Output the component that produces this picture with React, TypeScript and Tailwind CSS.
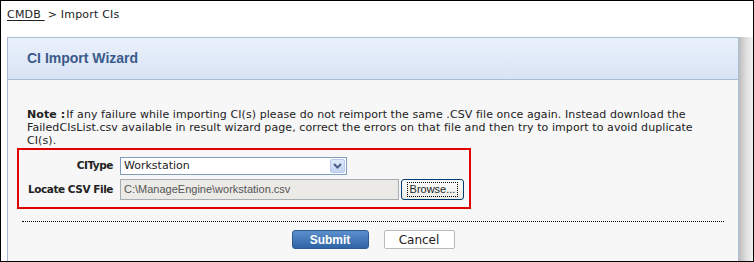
import React from "react";

const verdana = "font-['DejaVu_Sans',Verdana,sans-serif]";

const Label = ({ children }: { children: React.ReactNode }) => (
  <div className={`w-[93px] flex justify-end whitespace-nowrap text-[10.5px] tracking-[-0.45px] font-bold text-[#222] ${verdana}`}>{children}</div>
);

export default function App() {
  return (
    <div className="w-[754px] h-[262px] overflow-hidden border border-black bg-white">
      <div className={`flex items-center h-[27px] pl-[6px] pt-[1px] text-[11px] text-[#222] tracking-[0.2px] ${verdana}`}>
        <span className="underline underline-offset-2">CMDB&nbsp;</span>
        <span className="ml-[3px]">&gt; Import CIs</span>
      </div>

      <div className="flex mt-[9px] ml-[6px]">
        <div className="w-[732px] border-x border-t border-[#a9bcd6] bg-[#f7f7f7] h-[230px]">
          <div className="h-[42px] flex items-center pl-[19px] border-b border-[#a9bcd6] bg-gradient-to-b from-[#eaf1fb] to-[#d8e4f5]">
            <span className="font-['Liberation_Sans',Arial,sans-serif] font-bold text-[14px] text-[#3b5a8a]">CI Import Wizard</span>
          </div>

          <div className="pt-[28px]">
            {/* note split per line, as in the original */}
            <div className={`ml-[19px] text-[11px] leading-[13px] tracking-[0.08px] text-[#222] whitespace-nowrap ${verdana}`}>
              <div className="flex">
                <b className="mr-[1px]">Note :</b>
                <span>If any failure while importing CI(s) please do not reimport the same .CSV file once again. Instead download the</span>
              </div>
              <div>FailedCIsList.csv available in result wizard page, correct the errors on that file and then try to import to avoid duplicate</div>
              <div>CI(s).</div>
            </div>

            <div className="ml-[9px] mt-[1px] w-[454px] h-[61px] border-2 border-[#e00000] pl-[1px] pt-[7px] flex flex-col gap-[4px]">
              <div className="flex items-center gap-[7px]">
                <Label>CIType</Label>
                <div className="w-[227px] h-[18px] border border-[#7f9db9] bg-white flex items-center justify-between pl-[3px] pr-[1px]">
                  <span className={`text-[11px] text-[#222] ${verdana}`}>Workstation</span>
                  <span className="w-[15px] h-[14px] rounded-[2px] border border-[#b8c9ec] bg-gradient-to-b from-[#e0e9fb] to-[#c3d3f5] flex items-center justify-center">
                    <svg width="9" height="6" viewBox="0 0 9 6">
                      <path d="M1 1 L4.5 4.5 L8 1" fill="none" stroke="#4d6185" strokeWidth="2" />
                    </svg>
                  </span>
                </div>
              </div>
              <div className="flex items-center gap-[7px]">
                <Label>Locate CSV File</Label>
                <div className="flex items-center gap-[2px]">
                  <div className="w-[279px] h-[21px] border border-[#a5acb2] bg-[#ebeae6] flex items-center pl-[3px]">
                    <span className="text-[11px] text-[#555] font-['Liberation_Sans',Tahoma,sans-serif]">C:\ManageEngine\workstation.csv</span>
                  </div>
                  <div className="w-[63px] h-[21px] rounded-[3px] border border-[#003c74] bg-gradient-to-b from-[#ffffff] to-[#ecebe6] flex items-center justify-center">
                    <span className="px-[2px] border border-dotted border-black text-[11px] leading-[13px] text-[#222] font-['Liberation_Sans',Tahoma,sans-serif]">Browse...</span>
                  </div>
                </div>
              </div>
            </div>

            <div className="ml-[14px] mt-[12px] border-t border-dotted border-black w-[702px]" />

            <div className="flex justify-center gap-[15px] mt-[8px]">
              <button className="w-[77px] h-[19px] rounded-[3px] border border-[#2d5a92] bg-gradient-to-b from-[#5b8fcc] to-[#2f64a6] text-white text-[12px] font-bold font-['Liberation_Sans',Arial,sans-serif] leading-none">
                Submit
              </button>
              <button className={`w-[71px] h-[19px] rounded-[2px] border border-[#b9b9b9] bg-white text-[#222] text-[12px] leading-none ${verdana}`}>
                Cancel
              </button>
            </div>
          </div>
        </div>
        <div className="w-[14px] h-[230px] bg-gradient-to-r from-[#bdbdbd] via-[#dedede] to-[#f3f3f3]" />
      </div>
    </div>
  );
}
